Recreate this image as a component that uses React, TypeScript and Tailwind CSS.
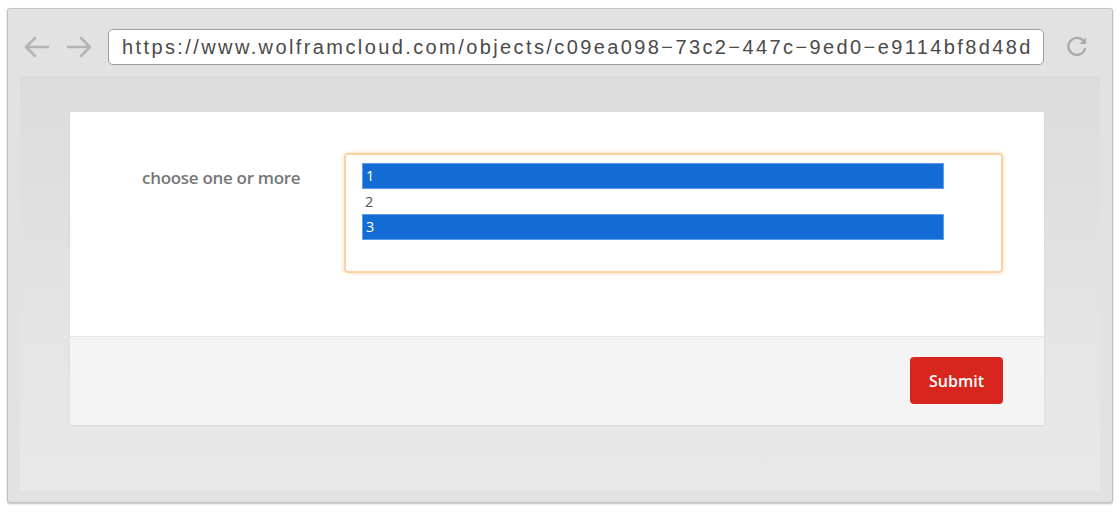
import { useState } from "react";

const url = "https://www.wolframcloud.com/objects/c09ea098\u221273c2\u2212447c\u22129ed0\u2212e9114bf8d48d";

function BackArrow({ flip }: { flip?: boolean }) {
  return (
    <svg width="28" height="24" viewBox="0 0 28 24" className={flip ? "-scale-x-100" : ""}>
      <path d="M3 12h22M12 3l-9 9 9 9" fill="none" stroke="#b4b4b4" strokeWidth="2.6" strokeLinecap="round" strokeLinejoin="round" />
    </svg>
  );
}

function Reload() {
  return (
    <svg width="26" height="26" viewBox="0 0 26 26">
      <path d="M20.5 9.5A8.5 8.5 0 1 0 21 16" fill="none" stroke="#ababab" strokeWidth="2.4" strokeLinecap="round" />
      <path d="M22 4.5v6.5h-6.5z" fill="#ababab" />
    </svg>
  );
}

const options = ["1", "2", "3"];

export default function App() {
  const [picked] = useState<string[]>(["1", "3"]);
  return (
    <div className="h-[512px] w-[1120px] bg-white pl-[7px] pt-[8px]">
      <div className="flex h-[495px] w-[1106px] flex-col rounded-[3px] border border-[#c2c2c2] bg-[#e2e2e2] shadow-[0_1px_2px_rgba(0,0,0,0.25)]">
        {/* toolbar */}
        <div className="flex h-[67px] items-start pl-[15px] pt-[20px]">
          <div className="mt-[6px] flex gap-[14px]">
            <BackArrow />
            <BackArrow flip />
          </div>
          <div className="ml-[15px] flex h-[36px] w-[936px] items-center overflow-hidden whitespace-nowrap rounded-[5px] border border-[#9d9d9d] bg-white pl-[13px]">
            <span className="font-['Liberation_Sans',sans-serif] text-[20px] tracking-[2.4px] text-[#4a4a4a]">{url}</span>
          </div>
          <div className="ml-[20px] mt-[4px]">
            <Reload />
          </div>
        </div>

        {/* page */}
        <div className="mx-[12px] mb-[12px] flex-1 bg-gradient-to-b from-[#dcdcdc] to-[#e9e9e9] pl-[50px] pt-[36px]">
          <div className="w-[974px] rounded-[2px] bg-white shadow-[0_1px_2px_rgba(0,0,0,0.08)]">
            <div className="flex h-[224px] pt-[41px]">
              <div className="w-[274px] pl-[72px] pt-[12px] font-['Open_Sans',sans-serif] text-[17px] font-semibold tracking-[-0.3px] text-[#777]">
                choose one or more
              </div>
              <div className="h-[120px] w-[659px] rounded-[4px] border-2 border-[#fcd2a4] pl-[16px] pt-[8px] shadow-[0_0_4px_rgba(253,190,120,0.6)]">
                {options.map((o) => (
                  <div
                    key={o}
                    className={
                      picked.includes(o)
                        ? "flex h-[26px] w-[582px] items-center border border-[#5e9ee8] bg-[#136cd5] pl-[3px] font-['Open_Sans',sans-serif] text-[14.5px] text-white"
                        : "flex h-[25px] w-[582px] items-center pl-[3px] font-['Open_Sans',sans-serif] text-[14.5px] text-[#555]"
                    }
                  >
                    {o}
                  </div>
                ))}
              </div>
            </div>
            <div className="flex h-[89px] justify-end border-t border-[#e6e6e6] bg-[#f4f4f4] pr-[41px] pt-[20px]">
              <button className="h-[47px] w-[93px] rounded-[4px] bg-[#d8261e] font-['Open_Sans',sans-serif] text-[16px] font-semibold text-white">
                Submit
              </button>
            </div>
          </div>
        </div>
      </div>
    </div>
  );
}
